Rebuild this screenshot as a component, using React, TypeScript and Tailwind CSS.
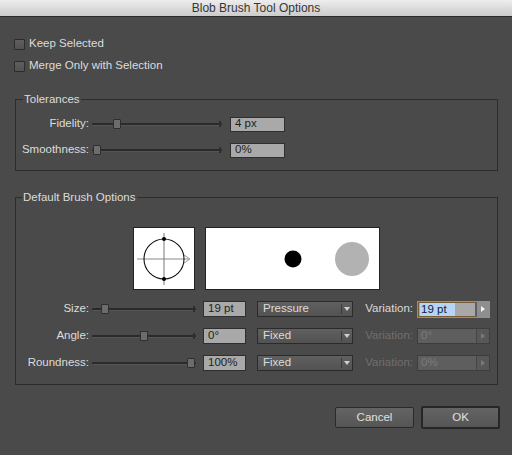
import React from "react";

function Slider({ width, thumb }: { width: number; thumb: number }) {
  return (
    <div className="relative h-[12px] flex items-center" style={{ width }}>
      <div className="w-full h-[3px] bg-[#2a2a2a] border-b border-[#555555] rounded-[1px]" />
      <div className="absolute right-[1px] top-[3px] w-[2px] h-[6px] bg-[#2e2e2e]" />
      <div
        className="absolute top-[1px] w-[8px] h-[10px] bg-[#6c6c6c] border border-[#2e2e2e] rounded-[1px]"
        style={{ left: thumb - 4 }}
      />
    </div>
  );
}

function Field({ value, w, h }: { value: string; w: string; h: string }) {
  return (
    <div
      className={`${w} ${h} bg-[#a9a9a9] border border-[#2f2f2f] text-[#1e1e1e] pl-[4px] flex items-center leading-none`}
    >
      {value}
    </div>
  );
}

function Dropdown({ label }: { label: string }) {
  return (
    <div className="ml-[11px] w-[96px] h-[16px] bg-gradient-to-b from-[#606060] to-[#525252] border border-[#2b2b2b] flex items-center">
      <div className="w-[83px] pl-[5px] text-[#dcdcdc] leading-none">{label}</div>
      <div className="w-[1px] h-[10px] bg-[#3a3a3a]" />
      <div className="flex-1 flex items-center justify-center">
        <div className="w-0 h-0 border-l-[3px] border-r-[3px] border-t-[4px] border-l-transparent border-r-transparent border-t-[#cfcfcf]" />
      </div>
    </div>
  );
}

function Variation({ value, active }: { value: string; active?: boolean }) {
  return (
    <>
      <div
        className={`ml-[10px] w-[50px] text-right ${active ? "text-[#dadada]" : "text-[#6f6f6f]"}`}
      >
        Variation:
      </div>
      {active ? (
        <div className="ml-[4px] w-[73px] h-[17px] border border-[#c7862f] flex bg-[#a8a8a8]">
          <div className="flex-1 flex items-center pl-[1px] border border-[#7a5a30]">
            <span className="bg-[#b6d4f6] text-[#141c3a] leading-[13px] pl-[1px] pr-[8px]">
              {value}
            </span>
          </div>
          <div className="w-[13px] bg-[#8e8e8e] border-l border-[#5e5e5e] flex items-center justify-center">
            <div className="w-0 h-0 border-t-[3px] border-b-[3px] border-l-[4px] border-t-transparent border-b-transparent border-l-[#f4f4f4]" />
          </div>
        </div>
      ) : (
        <div className="ml-[4px] w-[73px] h-[16px] border border-[#3d3d3d] flex bg-[#5e5e5e]">
          <div className="flex-1 flex items-center pl-[3px] text-[#7c7c7c] leading-none">
            {value}
          </div>
          <div className="w-[13px] bg-[#585858] border-l border-[#454545] flex items-center justify-center">
            <div className="w-0 h-0 border-t-[3px] border-b-[3px] border-l-[4px] border-t-transparent border-b-transparent border-l-[#7a7a7a]" />
          </div>
        </div>
      )}
    </>
  );
}

function BrushRow({
  label,
  thumb,
  value,
  mode,
  variation,
  active,
}: {
  label: string;
  thumb: number;
  value: string;
  mode: string;
  variation: string;
  active?: boolean;
}) {
  return (
    <div className="flex items-center h-[16px]">
      <div className="w-[73px] text-right">{label}</div>
      <div className="ml-[3px]">
        <Slider width={104} thumb={thumb} />
      </div>
      <div className="ml-[7px]">
        <Field value={value} w="w-[43px]" h="h-[16px]" />
      </div>
      <Dropdown label={mode} />
      <Variation value={variation} active={active} />
    </div>
  );
}

function Checkbox({ label }: { label: string }) {
  return (
    <div className="h-[22px] flex items-center pl-[14px] gap-[4px]">
      <div className="w-[11px] h-[11px] bg-gradient-to-b from-[#5e5e5e] to-[#535353] border border-[#2c2c2c] rounded-[1px]" />
      <span>{label}</span>
    </div>
  );
}

export default function App() {
  return (
    <div className="w-[512px] h-[455px] bg-[#4a4a4a] overflow-hidden font-['Liberation_Sans',Arial,sans-serif] text-[11.5px] text-[#dcdcdc] flex flex-col">
      <div className="h-[17px] shrink-0 bg-gradient-to-b from-[#ededed] to-[#cbcbcb] border-b border-[#2a2a2a] text-center text-[12px] leading-[16px] text-[#363636]">
        Blob Brush Tool Options
      </div>

      <div className="mt-[16px]">
        <Checkbox label="Keep Selected" />
        <Checkbox label="Merge Only with Selection" />
      </div>

      <div className="relative mt-[22px] ml-[15px] w-[483px] border border-[#2c2c2c] pt-[17px] pb-[13px]">
        <div className="absolute left-[7px] top-[-8px] px-[1px] bg-[#4a4a4a] leading-[14px]">
          Tolerances
        </div>
        <div className="flex items-center h-[14px]">
          <div className="w-[73px] text-right">Fidelity:</div>
          <div className="ml-[3px]">
            <Slider width={130} thumb={25} />
          </div>
          <div className="ml-[8px]">
            <Field value="4 px" w="w-[55px]" h="h-[15px]" />
          </div>
        </div>
        <div className="flex items-center h-[14px] mt-[12px]">
          <div className="w-[73px] text-right">Smoothness:</div>
          <div className="ml-[3px]">
            <Slider width={130} thumb={5} />
          </div>
          <div className="ml-[8px]">
            <Field value="0%" w="w-[55px]" h="h-[15px]" />
          </div>
        </div>
      </div>

      <div className="relative mt-[26px] ml-[15px] w-[483px] border border-[#2c2c2c] pt-[29px] pb-[13px]">
        <div className="absolute left-[6px] top-[-8px] px-[1px] bg-[#4a4a4a] leading-[14px]">
          Default Brush Options
        </div>
        <div className="flex ml-[117px] gap-[10px]">
          <div className="w-[62px] h-[63px] bg-white border border-[#222]">
            <svg width="60" height="61" viewBox="0 0 60 61">
              <line x1="3" y1="31" x2="55" y2="31" stroke="#8a8a8a" strokeWidth="1" />
              <polyline points="50,27 56,31 50,35" fill="none" stroke="#9a9a9a" strokeWidth="1" />
              <line x1="30" y1="5" x2="30" y2="57" stroke="#777" strokeWidth="1" />
              <circle cx="30" cy="31" r="20" fill="none" stroke="#111" strokeWidth="1.1" />
              <circle cx="30" cy="11" r="2" fill="#000" />
              <circle cx="30" cy="51" r="2" fill="#000" />
            </svg>
          </div>
          <div className="w-[175px] h-[63px] bg-white border border-[#222]">
            <svg width="173" height="61" viewBox="0 0 173 61">
              <circle cx="87" cy="31" r="8.5" fill="#000" />
              <circle cx="146" cy="31" r="17" fill="#b2b2b2" />
            </svg>
          </div>
        </div>
        <div className="mt-[11px] flex flex-col gap-[11px]">
          <BrushRow label="Size:" thumb={13} value="19 pt" mode="Pressure" variation="19 pt" active />
          <BrushRow label="Angle:" thumb={52} value="0°" mode="Fixed" variation="0°" />
          <BrushRow label="Roundness:" thumb={99} value="100%" mode="Fixed" variation="0%" />
        </div>
      </div>

      <div className="mt-[21px] flex justify-end items-center pr-[12px] gap-[7px]">
        <div className="w-[79px] h-[21px] bg-gradient-to-b from-[#646464] to-[#555555] border border-[#2a2a2a] rounded-[2px] flex items-center justify-center text-[#e0e0e0]">
          Cancel
        </div>
        <div className="w-[79px] h-[23px] bg-gradient-to-b from-[#646464] to-[#555555] border-2 border-[#262626] rounded-[2px] flex items-center justify-center text-[#e0e0e0]">
          OK
        </div>
      </div>
    </div>
  );
}
